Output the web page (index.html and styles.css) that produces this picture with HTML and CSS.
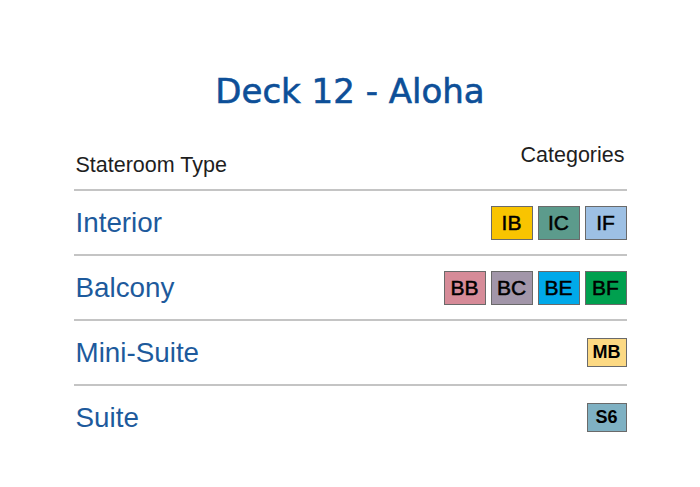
FILE: index.html
```html
<!DOCTYPE html>
<html>
<head>
<meta charset="utf-8">
<link rel="stylesheet" href="styles.css">
</head>
<body>
<h1 class="title">Deck 12 - Aloha</h1>
<div class="deck">
  <div class="header">
    <span class="head-type">Stateroom Type</span>
    <span class="head-cat">Categories</span>
  </div>
  <div class="row">
    <span class="type">Interior</span>
    <div class="badges">
      <span class="badge ib">IB</span>
      <span class="badge ic">IC</span>
      <span class="badge if">IF</span>
    </div>
  </div>
  <div class="row">
    <span class="type">Balcony</span>
    <div class="badges">
      <span class="badge bb">BB</span>
      <span class="badge bc">BC</span>
      <span class="badge be">BE</span>
      <span class="badge bf">BF</span>
    </div>
  </div>
  <div class="row">
    <span class="type">Mini-Suite</span>
    <div class="badges">
      <span class="badge small mb">MB</span>
    </div>
  </div>
  <div class="row last">
    <span class="type">Suite</span>
    <div class="badges">
      <span class="badge small s6">S6</span>
    </div>
  </div>
</div>
</body>
</html>
```
FILE: styles.css
```css
html, body {
  margin: 0;
  padding: 0;
  background: #ffffff;
}

.title {
  margin: 71px 0 0;
  font-family: "Comic Sans MS", "DejaVu Sans", sans-serif;
  font-weight: normal;
  font-size: 34px;
  line-height: 40px;
  color: #0d4f98;
  text-align: center;
  -webkit-text-stroke: 0.6px #0d4f98;
}

.deck {
  width: 553px;
  margin: 32px auto 0;
  font-family: "Liberation Sans", Arial, sans-serif;
}

.header {
  display: flex;
  justify-content: space-between;
  align-items: flex-end;
  padding: 0 2px 12px 2px;
  border-bottom: 2px solid #c4c4c4;
  font-size: 21.5px;
  line-height: 24px;
  color: #1e1e1e;
}

.head-cat {
  margin-bottom: 10px;
}

.row {
  display: flex;
  justify-content: space-between;
  align-items: center;
  height: 63px;
  padding-left: 2px;
  border-bottom: 2px solid #c4c4c4;
}

.row.last {
  border-bottom: none;
}

.type {
  font-size: 27.8px;
  line-height: 32px;
  color: #1d5a9c;
}

.badges {
  display: flex;
  gap: 5px;
}

.badge {
  box-sizing: border-box;
  display: flex;
  align-items: center;
  justify-content: center;
  width: 42px;
  height: 34px;
  border: 1.5px solid #6a6a6a;
  font-size: 21px;
  color: #000;
  -webkit-text-stroke: 0.5px #000;
}

.badge.small {
  width: 40px;
  height: 29px;
  font-size: 18px;
  font-weight: bold;
  -webkit-text-stroke: 0;
}

.ib { background: #f9c400; }
.ic { background: #5c9b8c; }
.if { background: #9dc0e4; }
.bb { background: #d68b98; }
.bc { background: #a296a9; }
.be { background: #00a9e9; }
.bf { background: #00a04f; }
.mb { background: #fcd983; }
.s6 { background: #7fb1c3; }
```
